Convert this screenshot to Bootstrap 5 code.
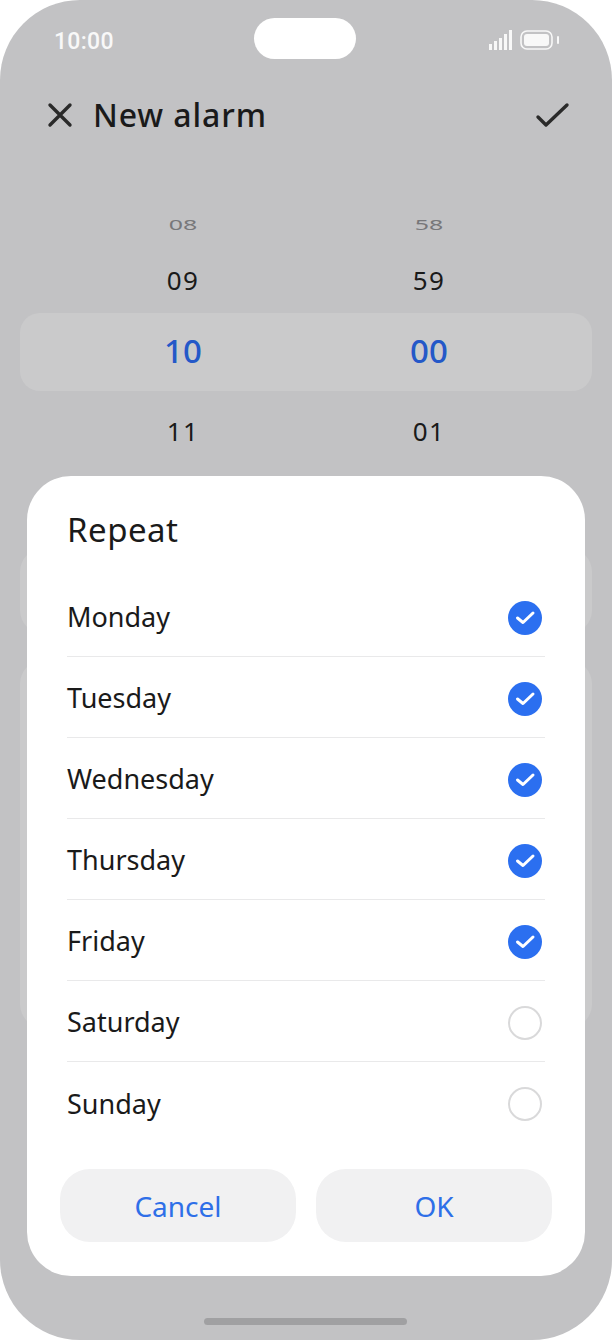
<!DOCTYPE html>
<html lang="en">
<head>
  <meta charset="UTF-8">
  <title>New alarm</title>
  <link href="https://cdn.jsdelivr.net/npm/bootstrap@5.3.0/dist/css/bootstrap.min.css" rel="stylesheet">
  <style>
    body {
      background-color: #fff;
      font-family: "Noto Sans", "Liberation Sans", sans-serif;
      color: #1a1a1a;
    }

    .phone {
      position: relative;
      width: 612px;
      height: 1340px;
      background-color: #c2c2c4;
      border-radius: 80px;
      overflow: hidden;
    }

    .status-row {
      height: 80px;
      padding: 18px 52px 0 54px;
    }

    .clock-text {
      font-family: "Roboto", sans-serif;
      font-size: 23px;
      font-weight: 500;
      line-height: 48px;
      letter-spacing: .3px;
      color: #f8f8f8;
    }

    .status-icons {
      padding-top: 12px;
    }

    .island {
      position: absolute;
      left: 254px;
      top: 18px;
      width: 102px;
      height: 41px;
      background-color: #fff;
      border-radius: 21px;
    }

    .title-row {
      height: 70px;
      padding: 0 42px 0 46px;
    }

    .title-text {
      font-size: 32px;
      font-weight: 500;
      line-height: 70px;
      letter-spacing: .9px;
      margin-left: 19px;
      color: #1a1a1a;
    }

    .wheel {
      padding-top: 59px;
    }

    .wheel-row {
      display: grid;
      grid-template-columns: 326px 166px;
      padding-left: 20px;
      text-align: center;
    }

    .wheel-far {
      height: 30px;
      margin-bottom: 21px;
      font-size: 25px;
      line-height: 30px;
      color: #77777a;
      transform: scaleY(.55);
    }

    .wheel-near {
      font-size: 26px;
      line-height: 40px;
      letter-spacing: 1.5px;
      color: #1a1a1a;
    }

    .wheel-current {
      margin: 13px 20px 20px;
      padding-left: 0;
      height: 78px;
      background-color: #cacacb;
      border-radius: 20px;
      font-size: 33px;
      font-weight: 500;
      line-height: 76px;
      color: #2458c8;
    }

    .back-card {
      margin-left: 20px;
      margin-right: 20px;
      background-color: #cacacb;
      border-radius: 24px;
    }

    .card-short {
      height: 86px;
      margin-top: 97px;
    }

    .card-tall {
      height: 368px;
      margin-top: 26px;
    }

    .dialog-box {
      position: absolute;
      left: 27px;
      top: 476px;
      width: 558px;
      height: 800px;
      background-color: #fff;
      border-radius: 44px;
      padding: 32px 33px 34px;
    }

    .dialog-title {
      font-size: 33px;
      font-weight: 400;
      line-height: 44px;
      letter-spacing: .5px;
      margin: 0 7px 24px;
      color: #1a1a1a;
    }

    .day-list {
      margin: 0 7px;
    }

    .day-row {
      height: 81px;
      padding-top: 10px;
      padding-bottom: 7px;
      background: transparent;
      border-color: #e9e9ea;
      font-size: 27px;
      color: #1a1a1a;
    }

    .tick-on, .tick-off {
      display: block;
      width: 34px;
      height: 34px;
      margin-right: 3px;
      border-radius: 50%;
    }

    .tick-on {
      background-color: #2b6ff0;
    }

    .tick-on svg {
      display: block;
    }

    .tick-off {
      border: 2px solid #d9d9da;
    }

    .dialog-btn {
      width: 236px;
      height: 73px;
      background-color: #f1f1f2;
      border: 0;
      border-radius: 30px;
      font-size: 28px;
      color: #2e6fe8;
    }

    .home-bar {
      position: absolute;
      left: 204px;
      top: 1318px;
      width: 203px;
      height: 7px;
      background-color: #a0a0a2;
      border-radius: 4px;
    }
  </style>
</head>
<body class="m-0">

  <div class="phone">
    <div class="status-row d-flex justify-content-between align-items-start">
      <span class="clock-text">10:00</span>
      <div class="status-icons d-flex align-items-center gap-2">
        <svg width="23" height="20" viewBox="0 0 23 20" fill="#f8f8f8">
          <rect x="0" y="14" width="3" height="6"/>
          <rect x="5" y="11" width="3" height="9"/>
          <rect x="10" y="8" width="3" height="12"/>
          <rect x="15" y="4" width="3" height="16"/>
          <rect x="20" y="0" width="3" height="20"/>
        </svg>
        <svg width="40" height="20" viewBox="0 0 40 20">
          <rect x="1" y="1" width="31" height="18" rx="6" fill="none" stroke="#f8f8f8" stroke-width="1.6"/>
          <rect x="4" y="4" width="25" height="12" rx="3" fill="#f8f8f8"/>
          <rect x="37" y="6" width="2" height="8" rx="1" fill="#f8f8f8"/>
        </svg>
      </div>
    </div>
    <div class="island"></div>

    <div class="title-row d-flex align-items-center">
      <svg width="28" height="28" viewBox="0 0 28 28" fill="none" stroke="#2a2a2a" stroke-width="3.4" stroke-linecap="round">
        <path d="M4 4L24 24M24 4L4 24"/>
      </svg>
      <span class="title-text">New alarm</span>
      <svg class="ms-auto" width="36" height="26" viewBox="0 0 36 26" fill="none" stroke="#2a2a2a" stroke-width="3.4" stroke-linecap="round" stroke-linejoin="round">
        <path d="M4 15L12 23L33 3"/>
      </svg>
    </div>

    <div class="wheel">
      <div class="wheel-row wheel-far"><span>08</span><span>58</span></div>
      <div class="wheel-row wheel-near"><span>09</span><span>59</span></div>
      <div class="wheel-row wheel-current"><span>10</span><span>00</span></div>
      <div class="wheel-row wheel-near"><span>11</span><span>01</span></div>
    </div>

    <div class="back-card card-short"></div>
    <div class="back-card card-tall"></div>

    <div class="dialog-box d-flex flex-column">
      <h2 class="dialog-title">Repeat</h2>
      <div class="list-group list-group-flush day-list" id="dayList"></div>
      <div class="d-flex justify-content-between mt-auto">
        <button type="button" class="btn dialog-btn">Cancel</button>
        <button type="button" class="btn dialog-btn">OK</button>
      </div>
    </div>

    <div class="home-bar"></div>
  </div>

  <script>
    const days = [
      ["Monday", true], ["Tuesday", true], ["Wednesday", true], ["Thursday", true],
      ["Friday", true], ["Saturday", false], ["Sunday", false]
    ];
    const tick = '<svg width="34" height="34" viewBox="0 0 34 34" fill="none" stroke="#fff" stroke-width="3" stroke-linecap="round" stroke-linejoin="round"><path d="M9.5 17L15 21.5L25 12"/></svg>';

    document.getElementById("dayList").innerHTML = days.map(d => `
      <div class="list-group-item day-row d-flex justify-content-between align-items-center px-0">
        <span>${d[0]}</span>
        <span class="${d[1] ? "tick-on" : "tick-off"}">${d[1] ? tick : ""}</span>
      </div>`).join("");
  </script>
  <script src="https://cdn.jsdelivr.net/npm/bootstrap@5.3.0/dist/js/bootstrap.bundle.min.js"></script>
</body>
</html>
